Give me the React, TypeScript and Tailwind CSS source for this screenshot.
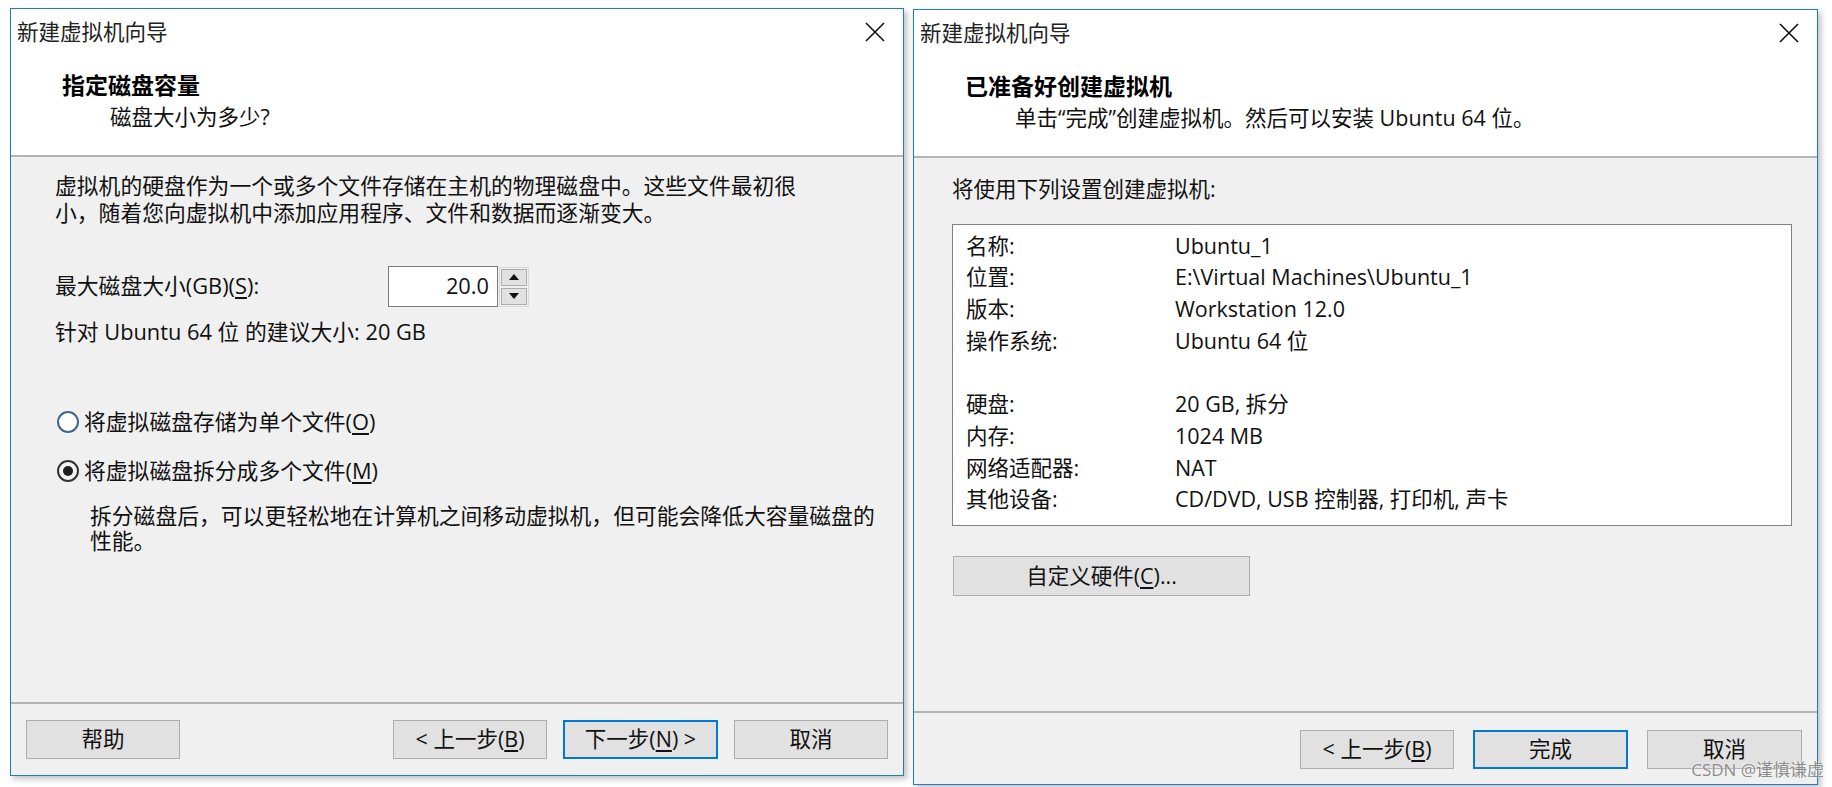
import React from 'react'

const font = {
  fontFamily: '"Segoe UI", "Open Sans", "Noto Sans CJK SC", sans-serif',
}

function U({ children }: { children: React.ReactNode }) {
  return <span className="underline underline-offset-[3px]">{children}</span>
}

function CloseX() {
  return (
    <svg width="20" height="20" viewBox="0 0 20 20">
      <path d="M1 1 L19 19 M19 1 L1 19" stroke="#111" strokeWidth="1.6" fill="none" />
    </svg>
  )
}

function Btn({
  children,
  primary,
  className = '',
}: {
  children: React.ReactNode
  primary?: boolean
  className?: string
}) {
  return (
    <div
      className={
        'flex items-center justify-center bg-[#e1e1e1] text-[21.5px] text-[#111] ' +
        (primary ? 'border-2 border-[#0078d7] ' : 'border border-[#adadad] ') +
        className
      }
    >
      {children}
    </div>
  )
}

function Radio({ checked }: { checked?: boolean }) {
  return (
    <div
      className={
        'w-[22px] h-[22px] rounded-full flex items-center justify-center shrink-0 ' +
        (checked ? 'border-2 border-[#333] bg-[#f4f4f4]' : 'border-2 border-[#41658a] bg-white')
      }
    >
      {checked && <div className="w-[10px] h-[10px] rounded-full bg-[#1e1e1e]" />}
    </div>
  )
}

function Header({ title, sub, subPad }: { title: string; sub: React.ReactNode; subPad: string }) {
  return (
    <div className="bg-white h-[146px] flex flex-col">
      <div className="h-[46px] flex items-center justify-between pl-[6px] pr-[18px]">
        <span className="text-[21.5px] text-[#222]">新建虚拟机向导</span>
        <CloseX />
      </div>
      <div className="mt-[15px] pl-[51px] text-[23px] leading-[30px] font-bold text-black">{title}</div>
      <div className={'mt-[2px] text-[21.5px] leading-[30px] text-[#111] ' + subPad}>{sub}</div>
    </div>
  )
}

function Spinner() {
  return (
    <div className="flex flex-col gap-[2px] ml-[1px] p-[1px] bg-[#f0f0f0] border border-[#d9d9d9]">
      <div className="w-[26px] h-[17px] bg-[#e1e1e1] border border-[#adadad] flex items-center justify-center">
        <svg width="10" height="6" viewBox="0 0 10 6">
          <path d="M0 6 L5 0 L10 6 Z" fill="#111" />
        </svg>
      </div>
      <div className="w-[26px] h-[17px] bg-[#e1e1e1] border border-[#adadad] flex items-center justify-center">
        <svg width="10" height="6" viewBox="0 0 10 6">
          <path d="M0 0 L10 0 L5 6 Z" fill="#111" />
        </svg>
      </div>
    </div>
  )
}

function LeftDialog() {
  return (
    <div className="w-[894px] h-[768px] border border-[#1c7cd5] flex flex-col bg-[#f0f0f0] shadow-[3px_3px_6px_rgba(0,0,0,0.25)] shrink-0">
      <Header title="指定磁盘容量" sub="磁盘大小为多少?" subPad="pl-[99px]" />
      <div className="h-[2px] bg-[#b4b4b4]" />
      <div className="flex-1 pl-[44px] pt-[15px] text-[21.8px] text-[#111]">
        <div className="leading-[27px]">
          虚拟机的硬盘作为一个或多个文件存储在主机的物理磁盘中。这些文件最初很
          <br />
          小，随着您向虚拟机中添加应用程序、文件和数据而逐渐变大。
        </div>
        <div className="mt-[40px] flex items-center h-[41px]">
          <div className="w-[333px]">
            最大磁盘大小(GB)(<U>S</U>):
          </div>
          <div className="w-[110px] h-[41px] bg-white border border-[#7a7a7a] flex items-center justify-end pr-[8px]">
            20.0
          </div>
          <Spinner />
        </div>
        <div className="mt-[11px] leading-[27px]">针对 Ubuntu 64 位 的建议大小: 20 GB</div>
        <div className="mt-[62px] flex items-center gap-[5px] h-[30px] pl-[2px]">
          <Radio />
          <span className="leading-[30px]">
            将虚拟磁盘存储为单个文件(<U>O</U>)
          </span>
        </div>
        <div className="mt-[19px] flex items-center gap-[5px] h-[30px] pl-[2px]">
          <Radio checked />
          <span className="leading-[30px]">
            将虚拟磁盘拆分成多个文件(<U>M</U>)
          </span>
        </div>
        <div className="mt-[17px] pl-[35px] leading-[25px]">
          拆分磁盘后，可以更轻松地在计算机之间移动虚拟机，但可能会降低大容量磁盘的
          <br />
          性能。
        </div>
      </div>
      <div className="h-[2px] bg-[#b4b4b4]" />
      <div className="h-[71px] pt-[16px] pl-[15px] pr-[15px] flex items-start">
        <Btn className="w-[154px] h-[39px]">帮助</Btn>
        <div className="flex-1" />
        <div className="flex gap-[16px]">
          <Btn className="w-[154px] h-[39px]">
            &lt; 上一步(<U>B</U>)
          </Btn>
          <Btn primary className="w-[155px] h-[39px]">
            下一步(<U>N</U>) &gt;
          </Btn>
          <Btn className="w-[154px] h-[39px]">取消</Btn>
        </div>
      </div>
    </div>
  )
}

const rows: [string, string][] = [
  ['名称:', 'Ubuntu_1'],
  ['位置:', 'E:\\Virtual Machines\\Ubuntu_1'],
  ['版本:', 'Workstation 12.0'],
  ['操作系统:', 'Ubuntu 64 位'],
  ['', ''],
  ['硬盘:', '20 GB, 拆分'],
  ['内存:', '1024 MB'],
  ['网络适配器:', 'NAT'],
  ['其他设备:', 'CD/DVD, USB 控制器, 打印机, 声卡'],
]

function RightDialog() {
  return (
    <div className="w-[905px] h-[776px] mt-[1px] border border-[#1c7cd5] flex flex-col bg-[#f0f0f0] shadow-[3px_3px_6px_rgba(0,0,0,0.25)] shrink-0">
      <Header
        title="已准备好创建虚拟机"
        sub="单击“完成”创建虚拟机。然后可以安装 Ubuntu 64 位。"
        subPad="pl-[101px]"
      />
      <div className="h-[2px] bg-[#b4b4b4]" />
      <div className="flex-1 pl-[38px] pt-[17px] text-[21.5px] text-[#111]">
        <div className="leading-[27px]">将使用下列设置创建虚拟机:</div>
        <div className="mt-[22px] w-[840px] h-[302px] bg-white border border-[#828282] pt-[5px] pl-[13px]">
          {rows.map(([k, v], i) => (
            <div key={i} className="flex h-[31.7px] items-center">
              <div className="w-[209px]">{k}</div>
              <div>{v}</div>
            </div>
          ))}
        </div>
        <Btn className="mt-[30px] ml-[1px] w-[297px] h-[40px]">
          自定义硬件(<U>C</U>)...
        </Btn>
      </div>
      <div className="h-[2px] bg-[#b4b4b4]" />
      <div className="h-[71px] pt-[17px] pr-[15px] flex justify-end items-start gap-[19px]">
        <Btn className="w-[154px] h-[39px]">
          &lt; 上一步(<U>B</U>)
        </Btn>
        <Btn primary className="w-[155px] h-[39px]">
          完成
        </Btn>
        <Btn className="w-[155px] h-[39px]">取消</Btn>
      </div>
    </div>
  )
}

export default function App() {
  return (
    <div className="w-[1832px] h-[787px] bg-white relative overflow-hidden" style={font}>
      <div className="flex pl-[10px] pt-[8px] gap-[9px]">
        <LeftDialog />
        <RightDialog />
      </div>
      <div className="absolute right-[8px] bottom-[5px] text-[17px] text-[#8c8c8c] [text-shadow:0_0_2px_#fff]">
        CSDN @谨慎谦虚
      </div>
    </div>
  )
}
